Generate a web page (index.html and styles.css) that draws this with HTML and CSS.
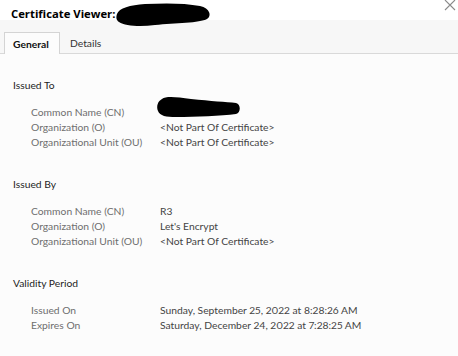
FILE: index.html
```html
<!DOCTYPE html>
<html lang="en">
<head>
<meta charset="utf-8">
<title>Certificate Viewer</title>
<link rel="stylesheet" href="styles.css">
</head>
<body>
<div class="window">
  <header class="titlebar">
    <span class="title">Certificate Viewer:</span>
    <svg class="redact redact-title" width="98" height="26" viewBox="0 0 98 26" aria-hidden="true">
      <path d="M2 12 C4 6 15 3 30 2 C50 1 70 1 85 4 C95 6 97 14 92 17 C85 21 60 21 40 23 C25 25 10 24 4 20 C1 18 1 15 2 12 Z" fill="#000"/>
    </svg>
    <svg class="close" width="14" height="14" viewBox="0 0 14 14" aria-hidden="true">
      <path d="M2 2 L12 12 M12 2 L2 12" stroke="#8a8a8a" stroke-width="1.1" fill="none"/>
    </svg>
  </header>
  <nav class="tabs">
    <div class="tab active">General</div>
    <div class="tab">Details</div>
  </nav>
  <main class="content">
    <section class="group">
      <h2 class="group-title">Issued To</h2>
      <div class="rows">
        <div class="label">Common Name (CN)</div>
        <div class="value">
          <svg class="redact" width="86" height="22" viewBox="0 0 86 22" aria-hidden="true">
            <path d="M6 3 C10 0 20 1 35 3 C55 5 70 6 80 7 C85 8 85 17 80 18 C65 20 40 21 20 21 C10 21 4 20 2 15 C0 10 2 5 6 3 Z" fill="#000"/>
          </svg>
        </div>
        <div class="label">Organization (O)</div>
        <div class="value">&lt;Not Part Of Certificate&gt;</div>
        <div class="label">Organizational Unit (OU)</div>
        <div class="value">&lt;Not Part Of Certificate&gt;</div>
      </div>
    </section>
    <section class="group">
      <h2 class="group-title">Issued By</h2>
      <div class="rows">
        <div class="label">Common Name (CN)</div>
        <div class="value">R3</div>
        <div class="label">Organization (O)</div>
        <div class="value">Let's Encrypt</div>
        <div class="label">Organizational Unit (OU)</div>
        <div class="value">&lt;Not Part Of Certificate&gt;</div>
      </div>
    </section>
    <section class="group">
      <h2 class="group-title">Validity Period</h2>
      <div class="rows">
        <div class="label">Issued On</div>
        <div class="value">Sunday, September 25, 2022 at 8:28:26 AM</div>
        <div class="label">Expires On</div>
        <div class="value">Saturday, December 24, 2022 at 7:28:25 AM</div>
      </div>
    </section>
  </main>
</div>
</body>
</html>
```

FILE: styles.css
```css
* { box-sizing: border-box; }
html, body {
  margin: 0;
  padding: 0;
  background: #fcfcfc;
}
body {
  font-family: Lato, "Open Sans", sans-serif;
  font-size: 10.3px;
  color: #333;
}
.window {
  width: 458px;
  height: 356px;
  display: flex;
  flex-direction: column;
  background: #fcfcfc;
  overflow: hidden;
}
.titlebar {
  position: relative;
  height: 20px;
  padding: 8px 0 0 11px;
  background: #ffffff;
  line-height: 12px;
  z-index: 2;
}
.title {
  font-family: "Open Sans", sans-serif;
  font-weight: 700;
  font-size: 11.3px;
  color: #000;
}
.redact-title {
  position: absolute;
  left: 115px;
  top: 2px;
}
.close {
  position: absolute;
  right: 1px;
  top: -2px;
}
.tabs {
  height: 34px;
  display: flex;
  align-items: flex-end;
  padding-left: 4px;
  background: #f7f7f7;
  border-bottom: 1px solid #d9d9d9;
}
.tab {
  height: 21px;
  padding: 4px 10px 0;
  line-height: 15px;
  color: #333;
}
.tab.active {
  width: 56px;
  height: 22px;
  margin-bottom: -1px;
  background: #fcfcfc;
  border: 1px solid #d4d4d4;
  border-bottom: none;
  font-weight: 700;
  color: #111;
  padding-left: 8px;
}
.content {
  padding: 24px 13px 0;
}
.group + .group {
  margin-top: 27px;
}
.group-title {
  margin: 0 0 12px;
  font-size: 10.3px;
  font-weight: 400;
  line-height: 15px;
  color: #1e1e1e;
}
.rows {
  display: grid;
  grid-template-columns: 129px 1fr;
  padding-left: 18px;
  line-height: 15px;
}
.label {
  color: #6e6e6e;
}
.value {
  color: #444;
  position: relative;
  font-variant-numeric: proportional-nums;
}
.value .redact {
  position: absolute;
  left: -4px;
  top: -9px;
}
```
